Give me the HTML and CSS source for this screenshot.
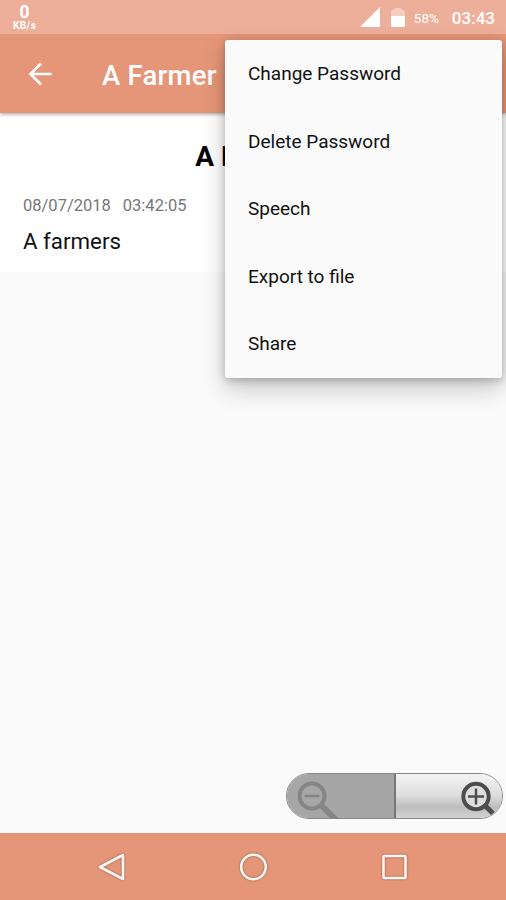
FILE: index.html
```html
<!DOCTYPE html>
<html lang="en">
  <head>
    <meta charset="UTF-8" />
    <meta name="viewport" content="width=device-width, initial-scale=1.0" />
    <title>A Farmer</title>
    <link rel="stylesheet" href="styles.css">
  </head>

  <body>
    <div class="status">
      <div class="speed">
        <span class="speed-num">0</span>
        <span class="speed-unit">KB/s</span>
      </div>
      <svg class="signal" width="20" height="20" viewBox="0 0 20 20">
        <path d="M20 0V20H0z" fill="#fff" />
      </svg>
      <svg class="battery" width="14" height="20" viewBox="0 0 14 20">
        <path d="M0 8V4Q0 2 3 2L4 0H10L11 2Q14 2 14 4V8z" fill="#f3cfbf" />
        <path d="M0 8H14V18Q14 19 13 19H1Q0 19 0 18z" fill="#fff" />
      </svg>
      <span class="percent">58%</span>
      <span class="clock">03:43</span>
    </div>

    <div class="toolbar">
      <svg class="back" width="24" height="24" viewBox="0 0 24 24" fill="none" stroke="#fff" stroke-width="2.6">
        <path d="M23.5 12H3M13 1.5L2.5 12L13 22.5" />
      </svg>
      <span class="title">A Farmer</span>
    </div>

    <div class="note">
      <h1>A Farmer</h1>
      <div class="date"><span>08/07/2018</span><span>03:42:05</span></div>
      <p>A farmers</p>
    </div>

    <div class="bottom">
      <div class="zoom">
        <div class="zoom-out">
          <svg width="44" height="44" viewBox="0 0 44 44" fill="none" stroke="#858585">
            <circle cx="14" cy="22" r="12.5" stroke-width="4" />
            <path d="M6.500 22H21.500" stroke-width="2.500" />
            <path d="M23 31L38 46" stroke-width="6" />
          </svg>
        </div>
        <div class="zoom-in">
          <svg width="42" height="44" viewBox="0 0 42 44" fill="none" stroke="#4d4d4d">
            <circle cx="20" cy="22.5" r="12.7" fill="#dedede" stroke-width="4" />
            <path d="M12 22.500H28M20 14.500V30.500" stroke-width="2.500" />
            <path d="M29 31.500L37 39.500" stroke-width="5" />
          </svg>
        </div>
      </div>
    </div>

    <div class="nav">
      <svg width="28" height="28" viewBox="0 0 28 28"><path d="M25 2V26L2 14z" /></svg>
      <svg width="28" height="28" viewBox="0 0 28 28"><circle cx="14.5" cy="14" r="12.3" /></svg>
      <svg width="28" height="28" viewBox="0 0 28 28"><rect x="3.5" y="3" width="22" height="22" rx="1" /></svg>
    </div>

    <ul class="menu">
      <li>Change Password</li>
      <li>Delete Password</li>
      <li>Speech</li>
      <li>Export to file</li>
      <li>Share</li>
    </ul>
  </body>
</html>
```

FILE: styles.css
```css
* {
  box-sizing: border-box;
}

body {
  margin: 0;
  height: 900px;
  display: flex;
  flex-direction: column;
  position: relative;
  overflow: hidden;
  background: #fafafa;
  color: #111;
  font-family: Roboto, sans-serif;
}

.status {
  height: 34px;
  display: flex;
  align-items: center;
  padding: 0 11px 0 13px;
  background: #edae9a;
  color: #fff;
  z-index: 2;
}

.speed {
  display: flex;
  flex-direction: column;
  align-items: center;
  margin-right: auto;
  font-weight: bold;
}

.speed-num {
  font-size: 17.5px;
  line-height: 17px;
}

.speed-unit {
  font-size: 10px;
  line-height: 10px;
  letter-spacing: 0.4px;
}

.signal {
  margin-right: 11px;
}

.battery {
  margin-top: 1px;
  margin-right: 9px;
}

.percent {
  margin: 2px 13px 0 0;
  font-size: 13.5px;
}

.clock {
  margin-top: 1px;
  font-size: 17px;
  font-weight: 500;
}

.toolbar {
  height: 79px;
  display: flex;
  align-items: center;
  padding-left: 28px;
  background: #e69678;
  color: #fff;
  box-shadow: 0 1px 4px rgba(0, 0, 0, 0.4);
  z-index: 1;
}

.title {
  margin: 3px 0 0 50px;
  font-size: 27.5px;
  font-weight: 500;
  letter-spacing: 0.25px;
}

.note {
  height: 159px;
  padding: 28px 23px 0;
  background: #fff;
}

.note h1 {
  margin: 0;
  text-align: center;
  color: #000;
  font-size: 28px;
  line-height: 32px;
}

.date {
  display: flex;
  gap: 12px;
  margin-top: 23px;
  color: #777;
  font-size: 16.5px;
  line-height: 20px;
}

.note p {
  margin: 12px 0 0;
  font-size: 22.3px;
  line-height: 26px;
}

.bottom {
  flex: 1;
  display: flex;
  justify-content: flex-end;
  align-items: flex-end;
  padding: 0 3px 14px;
}

.zoom {
  display: flex;
  width: 217px;
  height: 46px;
  border: 1px solid #888;
  border-radius: 23px;
  overflow: hidden;
}

.zoom-out {
  width: 109px;
  padding-left: 11px;
  background: #a6a6a6;
  border-right: 2px solid #777;
}

.zoom-in {
  flex: 1;
  display: flex;
  justify-content: flex-end;
  padding-right: 4px;
  background: linear-gradient(#f5f5f5, #dcdcdc 50%, #bdbdbd 75%, #d2d2d2);
}

.nav {
  height: 67px;
  display: flex;
  justify-content: center;
  align-items: center;
  gap: 113px;
  background: #e69678;
}

.nav svg {
  fill: none;
  stroke: #fff8f4;
  stroke-width: 2.6;
  stroke-linejoin: round;
  filter: drop-shadow(0 0 1px rgba(90, 50, 40, 0.6));
}

.menu {
  position: absolute;
  top: 40px;
  right: 4px;
  z-index: 2;
  width: 277px;
  height: 338px;
  margin: 0;
  padding: 0 23px;
  list-style: none;
  background: #fafafa;
  border-radius: 3px;
  box-shadow: 0 10px 24px rgba(0, 0, 0, 0.22), 0 2px 8px rgba(0, 0, 0, 0.22);
}

.menu li {
  height: 67.5px;
  font-size: 19px;
  line-height: 68px;
}
```
